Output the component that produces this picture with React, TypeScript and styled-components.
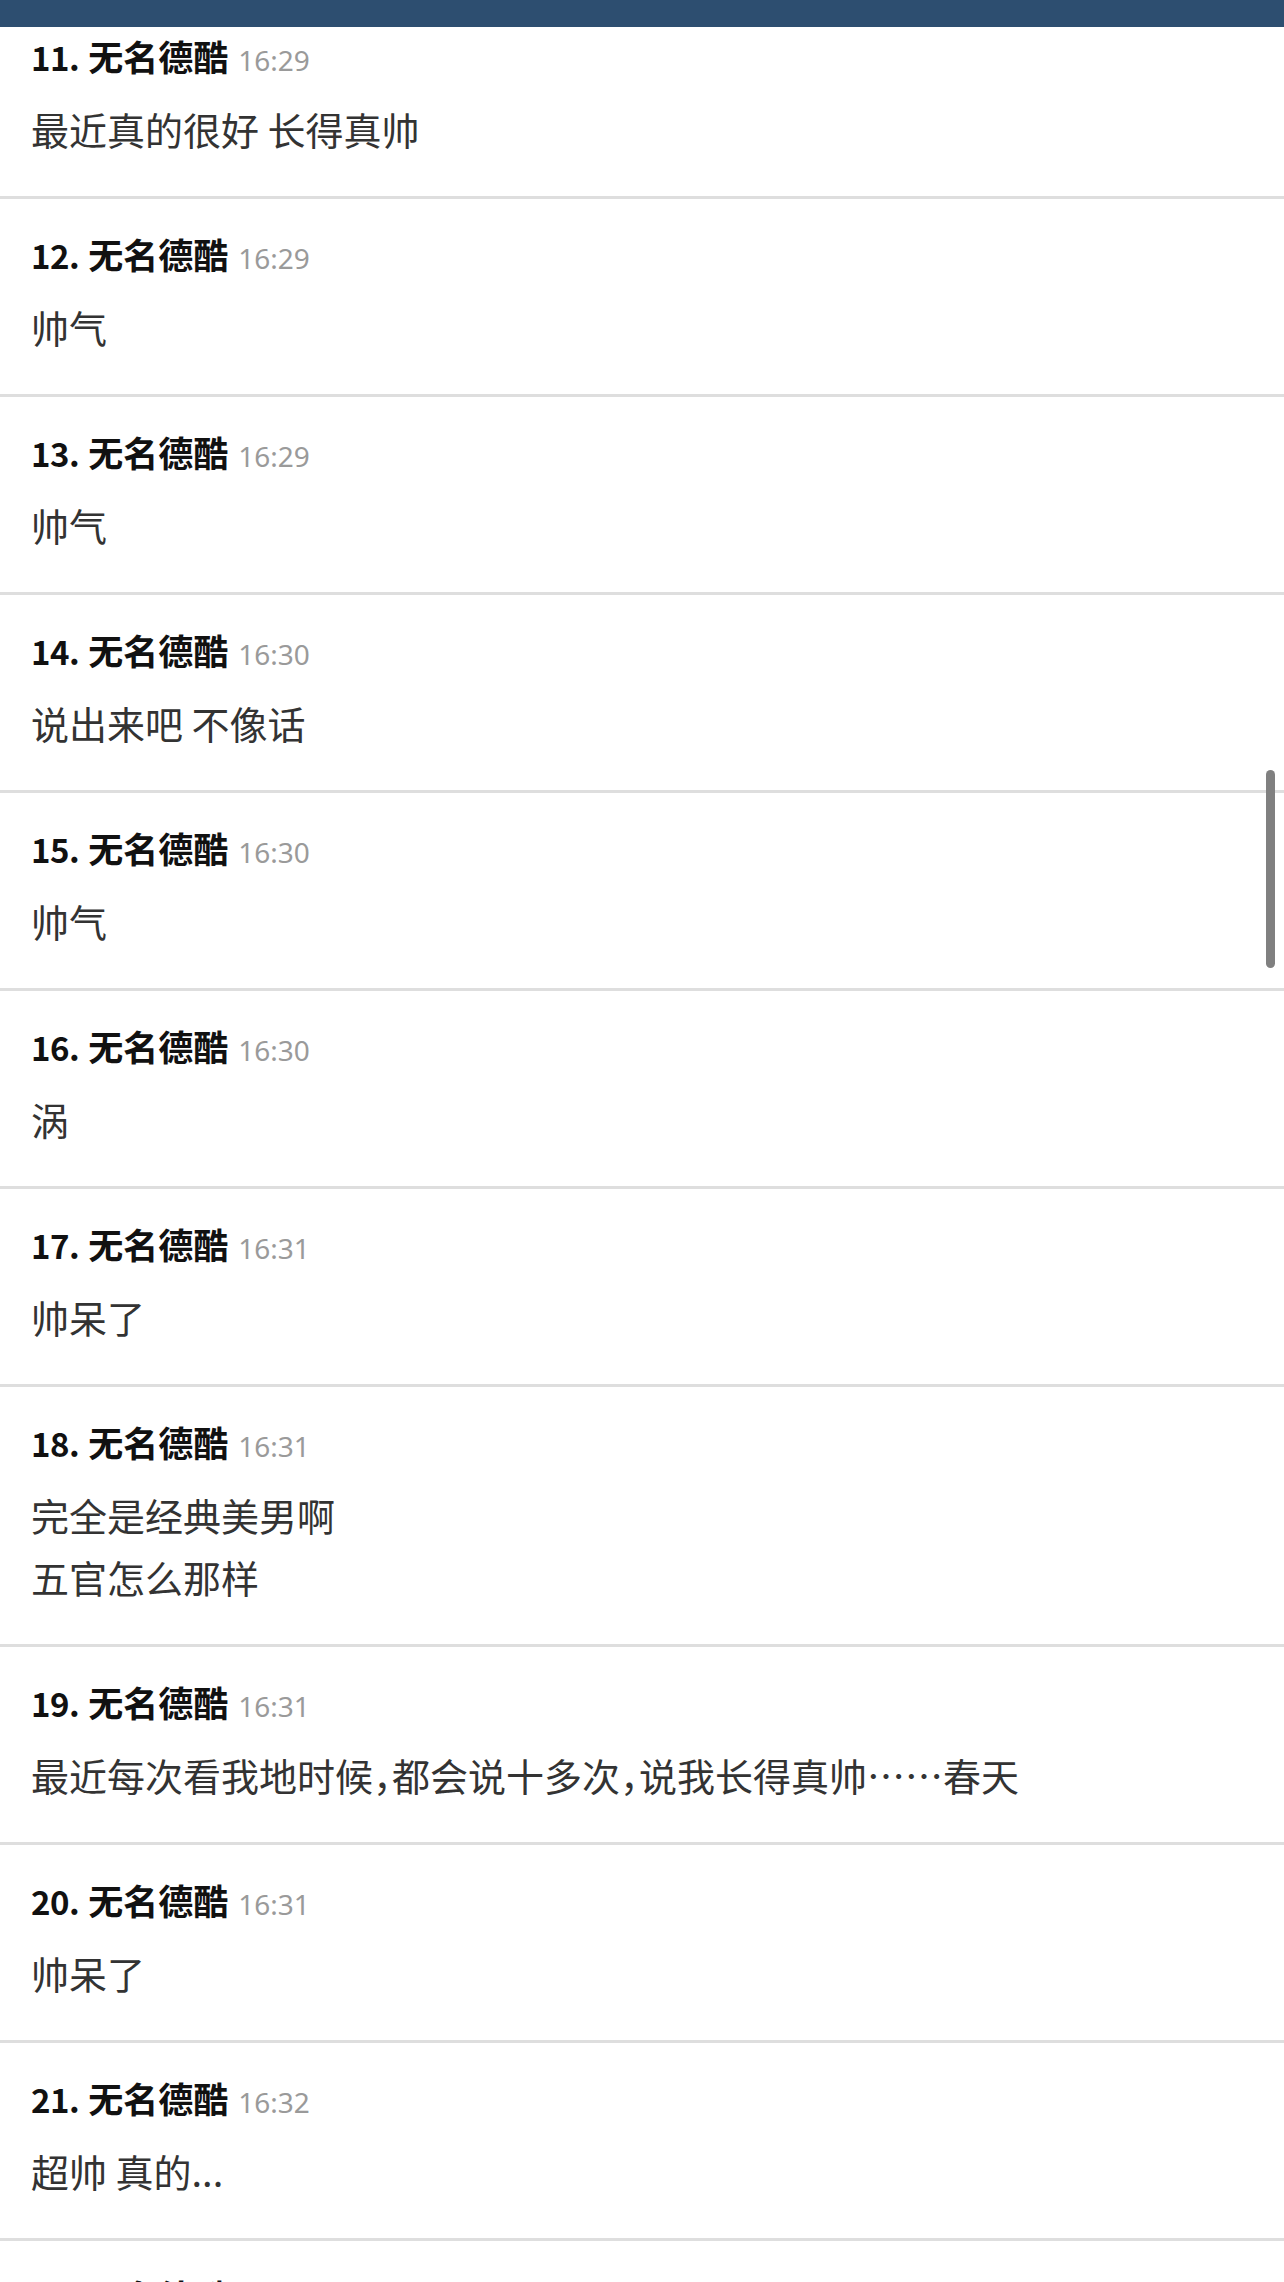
import React from "react";
import styled, { createGlobalStyle } from "styled-components";

type Reply = {
  floor: number;
  author: string;
  time: string;
  lines: string[];
};

const replies: Reply[] = [
  { floor: 11, author: "无名德酷", time: "16:29", lines: ["最近真的很好 长得真帅"] },
  { floor: 12, author: "无名德酷", time: "16:29", lines: ["帅气"] },
  { floor: 13, author: "无名德酷", time: "16:29", lines: ["帅气"] },
  { floor: 14, author: "无名德酷", time: "16:30", lines: ["说出来吧 不像话"] },
  { floor: 15, author: "无名德酷", time: "16:30", lines: ["帅气"] },
  { floor: 16, author: "无名德酷", time: "16:30", lines: ["涡"] },
  { floor: 17, author: "无名德酷", time: "16:31", lines: ["帅呆了"] },
  { floor: 18, author: "无名德酷", time: "16:31", lines: ["完全是经典美男啊", "五官怎么那样"] },
  {
    floor: 19,
    author: "无名德酷",
    time: "16:31",
    lines: ["最近每次看我地时候，都会说十多次，说我长得真帅……春天"],
  },
  { floor: 20, author: "无名德酷", time: "16:31", lines: ["帅呆了"] },
  { floor: 21, author: "无名德酷", time: "16:32", lines: ["超帅 真的..."] },
  { floor: 22, author: "无名德酷", time: "16:32", lines: ["帅"] },
];

const GlobalStyle = createGlobalStyle`
  html, body {
    margin: 0;
    padding: 0;
    background: #ffffff;
    overflow: hidden;
  }
  body {
    font-family: "Noto Sans CJK SC", "Noto Sans", sans-serif;
  }
`;

const App: React.FC = () => {
  return (
    <>
      <GlobalStyle />
      <StyledTopBar />
      <StyledList>
        {replies.map((r) => (
          <StyledRow key={r.floor}>
            <StyledHeader>
              <StyledFloor>{r.floor}.</StyledFloor>
              <StyledAuthor>{r.author}</StyledAuthor>
              <StyledTime>{r.time}</StyledTime>
            </StyledHeader>
            <StyledBody>
              {r.lines.map((line, i) => (
                <StyledLine key={i}>{line}</StyledLine>
              ))}
            </StyledBody>
          </StyledRow>
        ))}
      </StyledList>
      <StyledScrollThumb />
    </>
  );
};

const StyledTopBar = styled.div`
  position: fixed;
  top: 0;
  left: 0;
  right: 0;
  height: 27px;
  background: #2d4e70;
  z-index: 2;
`;

const StyledList = styled.div`
  display: flex;
  flex-direction: column;
  padding-top: 1px;
`;

const StyledRow = styled.div`
  display: flex;
  flex-direction: column;
  padding: 30px 31px 36px;
  border-bottom: 3px solid #dedede;
`;

const StyledHeader = styled.div`
  display: flex;
  align-items: baseline;
  height: 50px;
  line-height: 50px;
  white-space: nowrap;
  color: #111111;
  font-size: 35px;
  font-weight: 700;
`;

const StyledFloor = styled.span`
  margin-right: 9px;
  font-size: 33px;
  letter-spacing: -0.5px;
`;

const StyledAuthor = styled.span``;

const StyledTime = styled.span`
  margin-left: 10px;
  color: #9a9a9a;
  font-family: "Noto Sans", "Noto Sans CJK SC", sans-serif;
  font-size: 28px;
  font-weight: 400;
`;

const StyledBody = styled.div`
  display: flex;
  flex-direction: column;
  margin-top: 17px;
`;

const StyledLine = styled.div`
  color: #333333;
  font-size: 38px;
  font-weight: 400;
  line-height: 62px;
  white-space: nowrap;
  font-feature-settings: "halt";
`;

const StyledScrollThumb = styled.div`
  position: fixed;
  top: 770px;
  right: 9px;
  width: 9px;
  height: 198px;
  border-radius: 5px;
  background: #808080;
  z-index: 3;
`;

export default App;
